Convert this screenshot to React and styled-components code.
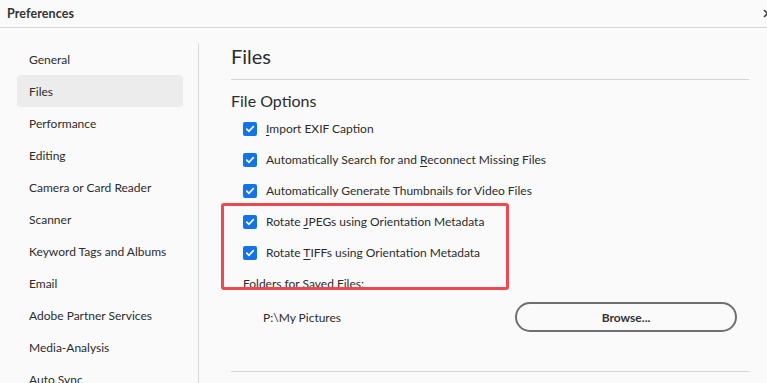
import React from "react";
import styled, { createGlobalStyle } from "styled-components";

const Global = createGlobalStyle`
  html, body { margin: 0; padding: 0; background: #fafafa; }
  body { font-family: Lato, "Noto Sans", sans-serif; color: #2c2c2c; }
  * { box-sizing: border-box; }
`;

const Window = styled.div`
  width: 767px;
  height: 383px;
  overflow: hidden;
  background: #fafafa;
  display: flex;
  flex-direction: column;
`;

const TitleBar = styled.div`
  height: 28px;
  flex: none;
  display: flex;
  align-items: center;
  justify-content: space-between;
  padding-left: 7px;
  border-bottom: 1px solid #d6d6d6;
  overflow: hidden;
`;

const Title = styled.div`
  font-size: 12.5px;
  font-weight: 700;
  color: #333;
  letter-spacing: 0.1px;
`;

const Close = styled.svg`
  width: 9px;
  height: 9px;
  margin-right: -5px;
  flex: none;
`;

const Body = styled.div`
  flex: 1;
  display: flex;
  min-height: 0;
`;

const Sidebar = styled.nav`
  width: 199px;
  flex: none;
  padding: 15px 16px 0 17px;
  display: flex;
  flex-direction: column;
  position: relative;
  &::after {
    content: "";
    position: absolute;
    right: 0;
    top: 15px;
    bottom: 0;
    width: 1px;
    background: #dadada;
  }
`;

const NavItem = styled.div`
  height: 32px;
  flex: none;
  display: flex;
  align-items: center;
  padding-left: 12px;
  font-size: 12px;
  color: #2c2c2c;
  border-radius: 4px;
  background: ${(p) => (p.$active ? "#ececec" : "transparent")};
`;

const Content = styled.section`
  flex: 1;
  padding: 14px 18px 0 32px;
  position: relative;
  display: flex;
  flex-direction: column;
`;

const Heading = styled.h1`
  margin: 0;
  font-size: 20px;
  font-weight: 400;
  line-height: 28px;
  color: #2c2c2c;
  padding-bottom: 9px;
  border-bottom: 1px solid #d5d5d5;
`;

const SubHeading = styled.h2`
  margin: 10px 0 0;
  font-size: 16px;
  font-weight: 400;
  line-height: 22px;
  color: #2c2c2c;
`;

const Options = styled.div`
  display: flex;
  flex-direction: column;
  padding-left: 12px;
  padding-right: 12px;
  margin-top: 1px;
`;

const CheckRow = styled.label`
  height: 31px;
  display: flex;
  align-items: center;
  gap: 9px;
  font-size: 12px;
  color: #2c2c2c;
`;

const Box = styled.span`
  width: 14px;
  height: 14px;
  border-radius: 2px;
  background: #1473e6;
  display: flex;
  align-items: center;
  justify-content: center;
  flex: none;
`;

const Key = styled.span`
  text-decoration: underline;
  text-underline-offset: 2px;
  text-decoration-thickness: 1px;
`;

const FieldLabel = styled.div`
  height: 31px;
  display: flex;
  align-items: center;
  font-size: 12px;
  color: #2c2c2c;
`;

const PathRow = styled.div`
  margin-top: 3px;
  height: 30px;
  display: flex;
  align-items: center;
  justify-content: space-between;
  padding-left: 20px;
`;

const PathText = styled.span`
  font-size: 12px;
  color: #2c2c2c;
`;

const Button = styled.button`
  width: 222px;
  height: 30px;
  border: 2px solid #6f6f6f;
  border-radius: 15px;
  background: #fafafa;
  font-family: Lato, "Noto Sans", sans-serif;
  font-size: 12px;
  font-weight: 700;
  color: #333;
  padding: 0;
`;

const BottomRule = styled.div`
  margin-top: 39px;
  height: 1px;
  background: #d5d5d5;
`;

const Highlight = styled.div`
  position: absolute;
  left: 22px;
  top: 175px;
  width: 288px;
  height: 87px;
  border: 3px solid #ec4a50;
  border-radius: 3px;
  pointer-events: none;
`;

const Check = () => (
  <Box>
    <svg width="10" height="10" viewBox="0 0 10 10">
      <path d="M1.8 5.2 L4 7.3 L8.3 2.6" fill="none" stroke="#fff" strokeWidth="1.7" strokeLinecap="round" strokeLinejoin="round" />
    </svg>
  </Box>
);

const navItems = [
  "General",
  "Files",
  "Performance",
  "Editing",
  "Camera or Card Reader",
  "Scanner",
  "Keyword Tags and Albums",
  "Email",
  "Adobe Partner Services",
  "Media-Analysis",
  "Auto Sync",
];

export default function App() {
  return (
    <Window>
      <Global />
      <TitleBar>
        <Title>Preferences</Title>
        <Close viewBox="0 0 9 9">
          <path d="M1 1 L8 8 M8 1 L1 8" stroke="#444" strokeWidth="1.6" />
        </Close>
      </TitleBar>
      <Body>
        <Sidebar>
          {navItems.map((n) => (
            <NavItem key={n} $active={n === "Files"}>{n}</NavItem>
          ))}
        </Sidebar>
        <Content>
          <Heading>Files</Heading>
          <SubHeading>File Options</SubHeading>
          <Options>
            <CheckRow><Check /><span><Key>I</Key>mport EXIF Caption</span></CheckRow>
            <CheckRow><Check /><span>Automatically Search for and <Key>R</Key>econnect Missing Files</span></CheckRow>
            <CheckRow><Check /><span>Automatically Generate Thumbnails for Video Files</span></CheckRow>
            <CheckRow><Check /><span>Rotate <Key>J</Key>PEGs using Orientation Metadata</span></CheckRow>
            <CheckRow><Check /><span>Rotate <Key>T</Key>IFFs using Orientation Metadata</span></CheckRow>
            <FieldLabel>Folders for Saved Files:</FieldLabel>
            <PathRow>
              <PathText>P:\My Pictures</PathText>
              <Button>Browse...</Button>
            </PathRow>
          </Options>
          <BottomRule />
          <Highlight />
        </Content>
      </Body>
    </Window>
  );
}
